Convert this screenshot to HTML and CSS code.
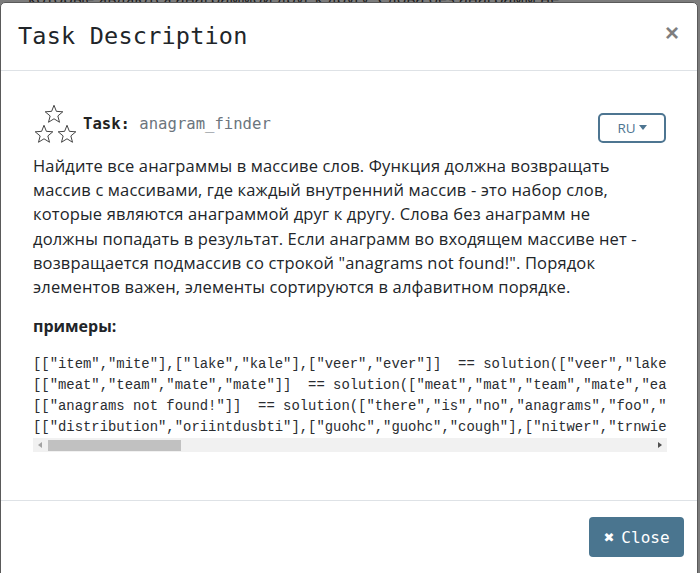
FILE: index.html
```html
<!DOCTYPE html>
<html>
<head>
<meta charset="utf-8">
<link rel="stylesheet" href="styles.css">
</head>
<body>
<div class="page-behind">которые являются анаграммой друг к другу. Слова без анаграмм не</div>
<div class="modal">
  <div class="modal-header">
    <h5 class="modal-title">Task Description</h5>
    <button class="btn-x" type="button">×</button>
  </div>
  <div class="modal-body">
    <div class="task-row">
      <div class="stars">
        <svg class="star star-top" viewBox="0 0 24 24"><path d="M12 2.5l2.6 6.6 7 .5-5.4 4.5 1.8 6.9L12 17.2 6 21l1.8-6.9L2.4 9.6l7-.5z"/></svg>
        <div class="stars-bottom">
          <svg class="star" viewBox="0 0 24 24"><path d="M12 2.5l2.6 6.6 7 .5-5.4 4.5 1.8 6.9L12 17.2 6 21l1.8-6.9L2.4 9.6l7-.5z"/></svg>
          <svg class="star" viewBox="0 0 24 24"><path d="M12 2.5l2.6 6.6 7 .5-5.4 4.5 1.8 6.9L12 17.2 6 21l1.8-6.9L2.4 9.6l7-.5z"/></svg>
        </div>
      </div>
      <div class="task-label"><span class="task-key">Task:</span> <span class="task-name">anagram_finder</span></div>
      <button class="lang-btn" type="button">RU<span class="caret"></span></button>
    </div>
    <p class="desc">Найдите все анаграммы в массиве слов. Функция должна возвращать<br>массив с массивами, где каждый внутренний массив - это набор слов,<br>которые являются анаграммой друг к другу. Слова без анаграмм не<br>должны попадать в результат. Если анаграмм во входящем массиве нет -<br>возвращается подмассив со строкой "anagrams not found!". Порядок<br>элементов важен, элементы сортируются в алфавитном порядке.</p>
    <p class="examples-title">примеры:</p>
    <div class="code-box">
      <pre class="code">[["item","mite"],["lake","kale"],["veer","ever"]]  == solution(["veer","lake","item","kale","mite","ever"])
[["meat","team","mate","mate"]]  == solution(["meat","mat","team","mate","eat","mate"])
[["anagrams not found!"]]  == solution(["there","is","no","anagrams","foo","bar"])
[["distribution","oriintdusbti"],["guohc","guohc","cough"],["nitwer","trnwie","winter"]]  == solution(["distribution","guohc","oriintdusbti","nitwer","guohc","cough","trnwie","winter"])</pre>
      <div class="hscroll">
        <span class="arrow arrow-left"></span>
        <span class="thumb"></span>
        <span class="arrow arrow-right"></span>
      </div>
    </div>
  </div>
  <div class="modal-footer">
    <button class="btn-close" type="button"><span class="close-x">✖</span><span>Close</span></button>
  </div>
</div>
</body>
</html>
```

FILE: styles.css
```css
html, body {
  margin: 0;
  padding: 0;
}
body {
  background: #7c7c7c;
  width: 700px;
  height: 573px;
  overflow: hidden;
  position: relative;
  font-family: "Open Sans", "Noto Sans", sans-serif;
}
.page-behind {
  position: absolute;
  top: -13px;
  left: 28px;
  font-size: 16px;
  color: #1a1a1a;
  white-space: nowrap;
}
.modal {
  position: relative;
  margin-top: 2px;
  width: 696px;
  height: 600px;
  background: #fff;
  border: 1px solid #5a5a5a;
  border-radius: 5px 5px 0 0;
  display: flex;
  flex-direction: column;
}
.modal-header {
  height: 68px;
  box-sizing: border-box;
  border-bottom: 1px solid #dee2e6;
  display: flex;
  align-items: center;
  justify-content: space-between;
  padding: 0 18px 2px 17px;
}
.modal-title {
  margin: 0;
  font-family: "DejaVu Sans Mono", monospace;
  font-weight: 400;
  font-size: 23.5px;
  color: #212529;
  letter-spacing: 0.2px;
}
.btn-x {
  border: 0;
  background: none;
  padding: 0;
  font-family: "Liberation Sans", sans-serif;
  font-size: 24px;
  font-weight: 700;
  color: #000;
  opacity: 0.5;
  line-height: 1;
  margin-top: -6px;
}
.modal-body {
  height: 429px;
  box-sizing: border-box;
  padding: 30px 31px 0 32px;
}
.task-row {
  display: flex;
  align-items: flex-start;
}
.stars {
  width: 44px;
  display: flex;
  flex-direction: column;
  align-items: center;
}
.star {
  width: 22px;
  height: 22px;
  fill: none;
  stroke: #333;
  stroke-width: 1;
  stroke-linejoin: miter;
}
.star-top {
  margin-left: -3px;
  margin-top: 2px;
}
.stars-bottom {
  display: flex;
  gap: 1px;
  margin-top: -2px;
}
.task-label {
  font-family: "DejaVu Sans Mono", monospace;
  font-size: 15.6px;
  margin-top: 14px;
  margin-left: 6px;
  flex: 1;
}
.task-key {
  color: #222;
  font-weight: 700;
}
.task-name {
  color: #6c757d;
}
.lang-btn {
  margin-top: 12px;
  width: 68px;
  height: 30px;
  border: 2px solid #4d7591;
  border-radius: 5px;
  background: #fff;
  color: #4d7591;
  font-family: "Open Sans", sans-serif;
  font-size: 13.5px;
  display: flex;
  align-items: center;
  justify-content: center;
  padding: 0;
}
.caret {
  display: inline-block;
  margin-left: 3px;
  margin-top: -2px;
  border-top: 5px solid #4d7591;
  border-left: 4.5px solid transparent;
  border-right: 4.5px solid transparent;
}
.desc {
  margin: 9px 0 0;
  font-family: "Open Sans", sans-serif;
  font-size: 16.5px;
  line-height: 24.2px;
  color: #212529;
  white-space: nowrap;
  letter-spacing: 0.15px;
}
.examples-title {
  margin: 16px 0 0;
  font-family: "Open Sans", sans-serif;
  font-weight: 700;
  font-size: 16px;
  color: #212529;
}
.code-box {
  margin-top: 17px;
  width: 634px;
}
.code {
  margin: 0;
  overflow: hidden;
  font-family: "Liberation Mono", monospace;
  font-size: 13.9px;
  line-height: 21px;
  color: #2a2d31;
}
.hscroll {
  margin-top: 0;
  height: 14px;
  background: #f1f1f1;
  display: flex;
  align-items: center;
}
.arrow {
  width: 0;
  height: 0;
  border-top: 3.5px solid transparent;
  border-bottom: 3.5px solid transparent;
}
.arrow-left {
  margin-left: 5px;
  border-right: 4px solid #a3a3a3;
}
.arrow-right {
  margin-left: auto;
  margin-right: 5px;
  border-left: 4px solid #505050;
}
.thumb {
  margin-left: 6px;
  width: 133px;
  height: 11px;
  background: #c1c1c1;
}
.modal-footer {
  border-top: 1px solid #dee2e6;
  display: flex;
  justify-content: flex-end;
  padding: 16px 13px 0 0;
}
.btn-close {
  width: 95px;
  height: 40px;
  border: 0;
  border-radius: 4px;
  background: #4a758f;
  color: #fff;
  font-family: "DejaVu Sans Mono", monospace;
  font-size: 16px;
  padding: 0;
  display: flex;
  align-items: center;
  justify-content: center;
  gap: 7px;
}
.close-x {
  font-family: "DejaVu Sans", sans-serif;
  font-size: 13px;
  font-weight: 700;
}
```
